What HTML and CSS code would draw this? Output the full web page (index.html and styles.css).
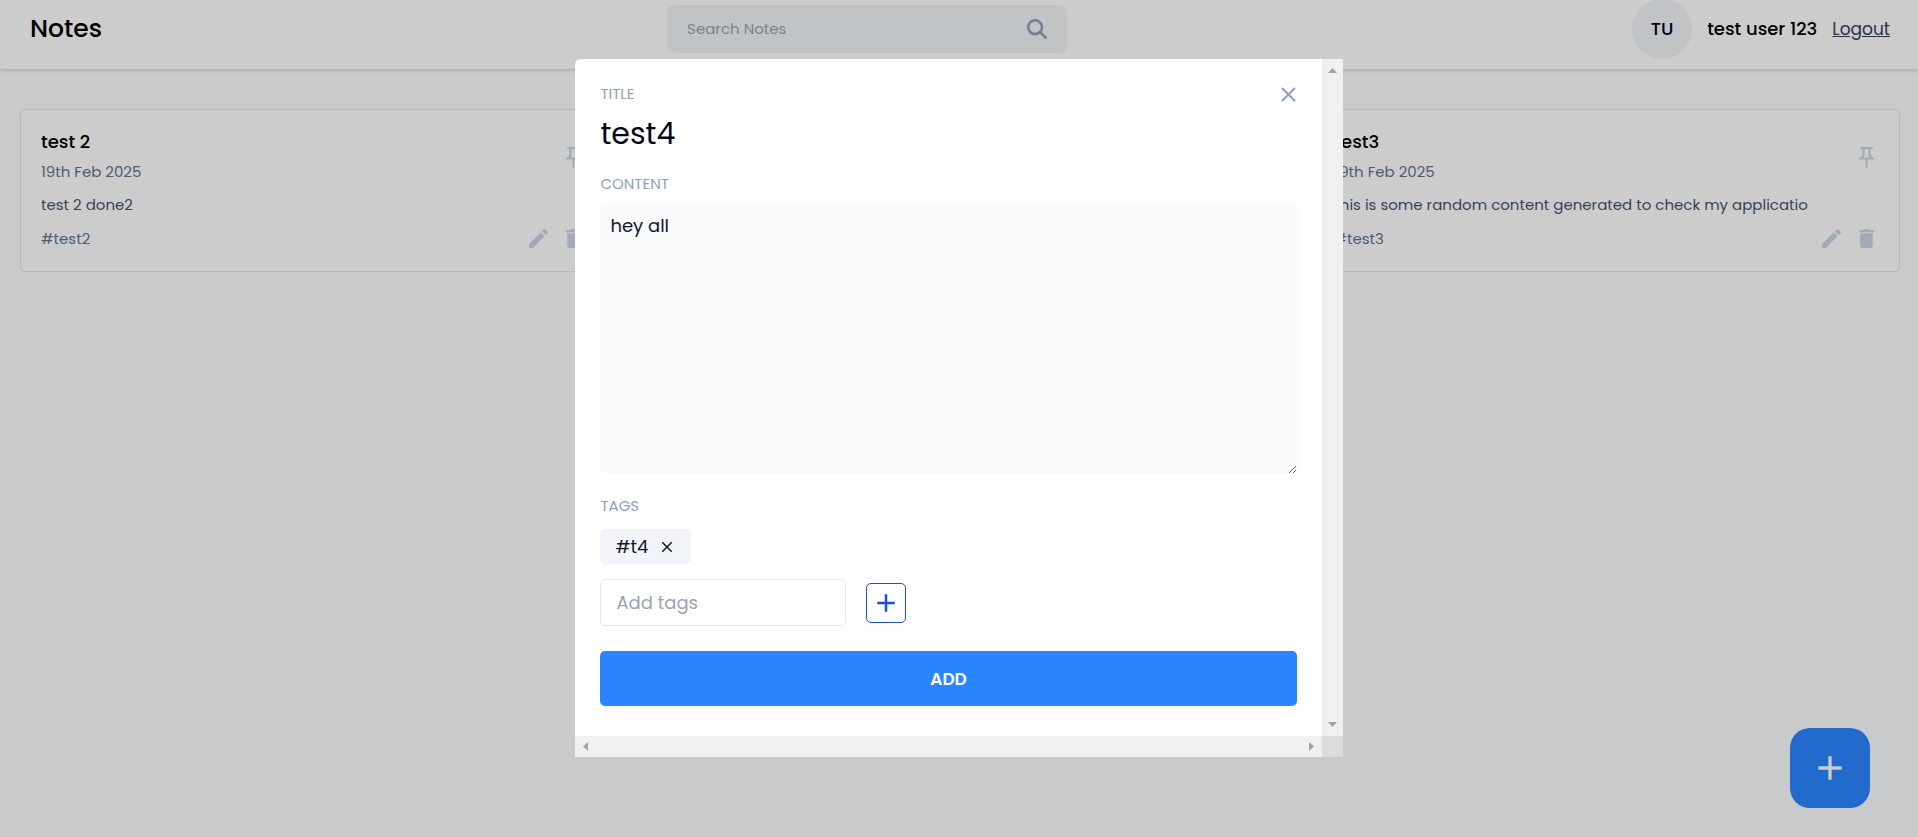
FILE: index.html
```html
<!DOCTYPE html>
<html lang="en">
<head>
<meta charset="utf-8">
<meta name="viewport" content="width=device-width, initial-scale=1">
<title>Notes</title>
<link rel="stylesheet" href="styles.css">
</head>
<body>
<svg class="symbols" aria-hidden="true">
  <symbol id="pin" viewBox="0 0 24 24"><path d="M14 4v5c0 1.12.37 2.16 1 3H9c.65-.86 1-1.9 1-3V4h4m3-2H7c-.55 0-1 .45-1 1s.45 1 1 1h1v5c0 1.66-1.34 3-3 3v2h5.97v7l1 1 1-1v-7H19v-2c-1.66 0-3-1.34-3-3V4h1c.55 0 1-.45 1-1s-.45-1-1-1z"/></symbol>
  <symbol id="pencil" viewBox="0 0 24 24"><path d="M3 17.25V21h3.75L17.81 9.94l-3.75-3.75L3 17.25zM20.71 7.04a.996.996 0 0 0 0-1.41l-2.34-2.34a.996.996 0 0 0-1.41 0l-1.83 1.83 3.75 3.75 1.83-1.83z"/></symbol>
  <symbol id="trash" viewBox="0 0 24 24"><path d="M6 19c0 1.1.9 2 2 2h8c1.1 0 2-.9 2-2V7H6v12zM19 4h-3.500l-1-1h-5l-1 1H5v2h14V4z"/></symbol>
  <symbol id="plus" viewBox="0 0 24 24"><path d="M19 13h-6v6h-2v-6H5v-2h6V5h2v6h6v2z"/></symbol>
  <symbol id="close" viewBox="0 0 24 24"><path d="M19 6.41 17.59 5 12 10.59 6.41 5 5 6.41 10.59 12 5 17.590 6.41 19 12 13.410 17.59 19 19 17.590 13.410 12z"/></symbol>
  <symbol id="search" viewBox="0 0 512 512"><path d="M416 208c0 45.900-14.900 88.300-40 122.700l126.600 126.700c12.500 12.500 12.500 32.800 0 45.300s-32.800 12.500-45.300 0L330.700 376c-34.400 25.200-76.800 40-122.700 40C93.100 416 0 322.900 0 208S93.100 0 208 0s208 93.100 208 208zM208 352a144 144 0 1 0 0-288 144 144 0 1 0 0 288z"/></symbol>
</svg>

<header class="navbar">
  <h1 class="brand">Notes</h1>
  <form class="search" role="search">
    <input class="search-input" type="text" placeholder="Search Notes" aria-label="Search Notes">
    <button class="icon-button search-button" type="button" aria-label="Search"><svg class="icon-small"><use href="#search"/></svg></button>
  </form>
  <div class="profile">
    <div class="avatar">TU</div>
    <p class="user-name">test user 123</p>
    <a class="logout" href="#">Logout</a>
  </div>
</header>

<main class="notes">
  <article class="note">
    <div class="note-head">
      <div>
        <h2 class="note-title">test 2</h2>
        <p class="note-date">19th Feb 2025</p>
      </div>
      <button class="icon-button" type="button" aria-label="Pin note"><svg class="icon"><use href="#pin"/></svg></button>
    </div>
    <p class="note-text">test 2 done2</p>
    <div class="note-foot">
      <p class="note-tags">#test2</p>
      <div class="note-actions">
        <button class="icon-button" type="button" aria-label="Edit note"><svg class="icon"><use href="#pencil"/></svg></button>
        <button class="icon-button" type="button" aria-label="Delete note"><svg class="icon"><use href="#trash"/></svg></button>
      </div>
    </div>
  </article>
  <article class="note note-last">
    <div class="note-head">
      <div>
        <h2 class="note-title">test3</h2>
        <p class="note-date">19th Feb 2025</p>
      </div>
      <button class="icon-button" type="button" aria-label="Pin note"><svg class="icon"><use href="#pin"/></svg></button>
    </div>
    <p class="note-text">this is some random content generated to check my applicatio</p>
    <div class="note-foot">
      <p class="note-tags">#test3</p>
      <div class="note-actions">
        <button class="icon-button" type="button" aria-label="Edit note"><svg class="icon"><use href="#pencil"/></svg></button>
        <button class="icon-button" type="button" aria-label="Delete note"><svg class="icon"><use href="#trash"/></svg></button>
      </div>
    </div>
  </article>
</main>

<button class="fab" type="button" aria-label="Add note"><svg class="icon-large"><use href="#plus"/></svg></button>

<div class="overlay">
  <section class="modal" role="dialog" aria-modal="true" aria-label="Add note">
    <form class="editor">
      <div class="editor-top">
        <label class="label" for="title">TITLE</label>
        <button class="icon-button close-button" type="button" aria-label="Close"><svg class="icon"><use href="#close"/></svg></button>
      </div>
      <input class="title-input" id="title" type="text" value="test4">
      <label class="label" for="content">CONTENT</label>
      <textarea class="content-input" id="content">hey all</textarea>
      <label class="label" for="tag">TAGS</label>
      <div class="chips">
        <span class="chip">#t4 <button class="icon-button chip-remove" type="button" aria-label="Remove tag"><svg class="icon-chip"><use href="#close"/></svg></button></span>
      </div>
      <div class="tag-row">
        <input class="tag-input" id="tag" type="text" placeholder="Add tags">
        <button class="tag-add" type="button" aria-label="Add tag"><svg class="icon-medium"><use href="#plus"/></svg></button>
      </div>
      <button class="submit" type="submit">ADD</button>
    </form>
    <div class="bar bar-vertical" aria-hidden="true">
      <svg class="arrow" viewBox="0 0 21 21"><path d="M6 14h9l-4.500-5z"/></svg>
      <svg class="arrow" viewBox="0 0 21 21"><path d="M6 7h9l-4.500 5z"/></svg>
    </div>
    <div class="bar" aria-hidden="true">
      <svg class="arrow" viewBox="0 0 21 21"><path d="M13 6v9l-5-4.500z"/></svg>
      <svg class="arrow" viewBox="0 0 21 21"><path d="M8 6v9l5-4.500z"/></svg>
    </div>
    <div class="bar-corner"></div>
  </section>
</div>
</body>
</html>
```

FILE: styles.css
```css
* { box-sizing: border-box; }

body {
  margin: 0;
  min-height: 100vh;
  background: #fbfdff;
  color: #0f172b;
  font-family: Poppins, Inter, "Open Sans", sans-serif;
  font-size: 18px;
  line-height: 24px;
  overflow: hidden;
}

h1, h2, p { margin: 0; font-weight: 500; }

button, input, textarea { font: inherit; color: inherit; }

svg { display: block; fill: currentColor; }

.symbols { display: none; }
.icon { width: 25px; height: 25px; }
.icon-small { width: 20px; height: 20px; }
.icon-medium { width: 30px; height: 30px; }
.icon-large { width: 40px; height: 40px; }
.icon-chip { width: 18px; height: 18px; }

.icon-button {
  padding: 0;
  border: 0;
  background: none;
  color: #cbd5e1;
  cursor: pointer;
}

.navbar {
  display: flex;
  align-items: center;
  justify-content: space-between;
  margin-top: -1px;
  padding: 0 28px 10px 30px;
  background: #fff;
  box-shadow: 0 1px 4px rgba(0, 0, 0, .2);
}

.brand { color: #000; font-size: 25px; line-height: 36px; }

.search {
  display: flex;
  align-items: center;
  width: 400px;
  height: 48px;
  padding: 0 20px;
  border-radius: 8px;
  background: #f1f5f9;
}

.search-input {
  flex: 1;
  min-width: 0;
  padding: 0;
  border: 0;
  background: none;
  font-size: 15px;
}

.search-button { color: #90a1b9; }

::placeholder { color: #9ca3af; opacity: 1; }

.profile { display: flex; align-items: center; gap: 15px; }

.avatar {
  display: grid;
  place-items: center;
  width: 60px;
  height: 60px;
  border-radius: 50%;
  background: #f1f5f9;
  color: #020618;
  font-weight: 500;
}

.user-name { color: #000; }
.logout { color: #314158; font-size: 17px; }

.notes {
  display: grid;
  grid-template-columns: repeat(3, 1fr);
  gap: 60px;
  padding: 40px 18px 40px 20px;
}

.note {
  display: grid;
  gap: 9px;
  padding: 20px;
  border: 1px solid #e5e7eb;
  border-radius: 5px;
  background: #fff;
  font-size: 15px;
}

.note-last { grid-column: 3; }
.note-head, .note-foot { display: flex; align-items: center; justify-content: space-between; }
.note-title { margin-bottom: 6px; color: #000; font-size: 18px; }
.note-date, .note-tags { color: #62748e; font-weight: 400; }
.note-text { color: #45556c; font-weight: 400; white-space: nowrap; }
.note-actions { display: flex; gap: 10px; }

.fab {
  position: fixed;
  right: 48px;
  bottom: 29px;
  display: grid;
  place-items: center;
  width: 80px;
  height: 80px;
  padding: 0;
  border: 0;
  border-radius: 20px;
  background: #2b85ff;
  color: #fff;
}

.overlay {
  position: fixed;
  inset: 0;
  display: flex;
  align-items: flex-start;
  justify-content: center;
  padding-top: 59px;
  background: rgba(0, 0, 0, .2);
}

.modal {
  display: grid;
  grid-template-columns: 1fr 21px;
  grid-template-rows: auto 21px;
  width: 40%;
  min-width: 480px;
  border-radius: 6px 0 0 0;
  background: #fff;
}

.editor { display: flex; flex-direction: column; padding: 25px 25px 30px; }
.editor-top { display: flex; justify-content: space-between; height: 20px; margin-right: -4px; align-items: center; }
.label { color: #90a1b9; font-size: 15px; line-height: 20px; }
.close-button { color: #90a1b9; }

.title-input {
  width: 100%;
  height: 40px;
  margin: 10px 0 20px;
  padding: 0;
  border: 0;
  color: #020618;
  font-size: 30px;
  outline: 0;
}

.content-input {
  height: 270px;
  margin: 10px 0 22px;
  padding: 10px;
  border: 0;
  border-radius: 5px;
  background: #f8fafc;
  resize: vertical;
}

.chips { display: flex; margin: 13px 0 15px; }

.chip {
  display: flex;
  align-items: center;
  gap: 10px;
  height: 35px;
  padding: 0 15px;
  border-radius: 5px;
  background: #f1f5f9;
}

.chip-remove { color: inherit; }

.tag-row { display: flex; align-items: center; gap: 20px; }

.tag-input {
  width: 246px;
  height: 47px;
  padding: 0 15px;
  border: 1px solid #e5e7eb;
  border-radius: 5px;
  background: none;
}

.tag-add {
  display: grid;
  place-items: center;
  width: 40px;
  height: 40px;
  padding: 0;
  border: 1px solid #1d4ed8;
  border-radius: 5px;
  background: none;
  color: #1d4ed8;
}

.submit {
  height: 55px;
  margin-top: 25px;
  border: 0;
  border-radius: 5px;
  background: #2b85ff;
  color: #fff;
  font-size: 17px;
  font-weight: 600;
}

.bar { display: flex; justify-content: space-between; background: #f0f0f0; color: #a3a3a3; }
.bar-vertical { flex-direction: column; }
.bar-corner { background: #dcdcdc; }
.arrow { width: 21px; height: 21px; }
```
